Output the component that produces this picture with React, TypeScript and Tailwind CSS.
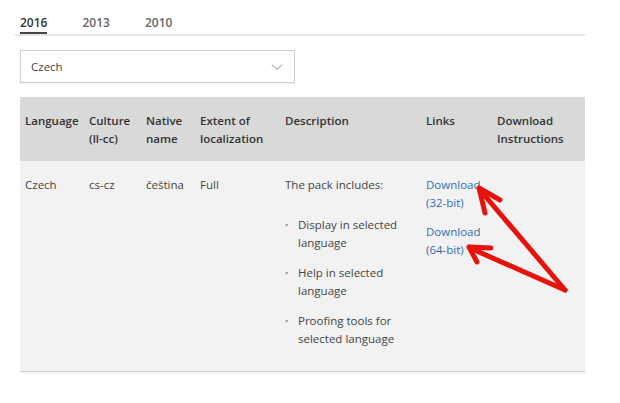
import React from "react";

const font = { fontFamily: '"Open Sans", "Noto Sans", sans-serif' };

const headers = [
  { label: ["Language"], w: "w-[64px]" },
  { label: ["Culture", "(ll-cc)"], w: "w-[57px]" },
  { label: ["Native", "name"], w: "w-[54px]" },
  { label: ["Extent of", "localization"], w: "w-[85px]" },
  { label: ["Description"], w: "w-[141px]" },
  { label: ["Links"], w: "w-[71px]" },
  { label: ["Download", "Instructions"], w: "flex-1" },
];

const bullets = [
  ["Display in selected", "language"],
  ["Help in selected", "language"],
  ["Proofing tools for", "selected language"],
];

function Arrows() {
  return (
    <svg className="pointer-events-none absolute left-0 top-0" width="620" height="403" viewBox="0 0 620 403">
      <g stroke="#e8120c" strokeWidth="5" strokeLinecap="round" strokeLinejoin="round" fill="none">
        <path d="M565 290 L480 190" />
        <path d="M479 188 L500 200 M479 188 L485 213" />
        <path d="M565 290 L470 248" />
        <path d="M469 247 L491 248 M469 247 L477 262" />
      </g>
    </svg>
  );
}

export default function App() {
  return (
    <div className="relative h-[403px] w-[620px] overflow-hidden bg-white text-[11.5px] text-[#444]" style={font}>
      <div className="pl-[20px] pr-[35px] pt-[14px]">
        {/* tabs */}
        <div className="flex items-end gap-[35px] text-[12px] font-semibold leading-[18px]">
          <div className="border-b-2 border-[#444] text-[#333]">2016</div>
          <div className="pb-[2px] text-[#666]">2013</div>
          <div className="pb-[2px] text-[#666]">2010</div>
        </div>
        <div className="-ml-[5px] h-[2px] bg-[#e6e6e6]" />

        {/* select */}
        <div className="mt-[14px] flex h-[33px] w-[275px] items-center justify-between border border-[#cfcfcf] bg-white pl-[10px] pr-[11px] shadow-[0_1px_1px_rgba(0,0,0,0.06)]">
          <span className="text-[#444]">Czech</span>
          <svg width="12" height="8" viewBox="0 0 12 8">
            <path d="M1 1.5 L6 6.5 L11 1.5" stroke="#8a8a8a" strokeWidth="1" fill="none" />
          </svg>
        </div>

        {/* table */}
        <div className="mt-[14px] w-[565px]">
          <div className="flex h-[64px] bg-[#d9d9d9] pt-[15px] font-semibold leading-[18px] text-[#333]">
            {headers.map((h, i) => (
              <div key={i} className={`${h.w} pl-[5px]`}>
                {h.label.map((l) => (
                  <div key={l}>{l}</div>
                ))}
              </div>
            ))}
          </div>
          <div className="flex h-[211px] border-b border-[#cfcfcf] bg-[#f2f2f2] pt-[15px] leading-[18px] shadow-[0_1px_1px_rgba(0,0,0,0.05)]">
            <div className="w-[64px] pl-[5px]">Czech</div>
            <div className="w-[57px] pl-[5px]">cs-cz</div>
            <div className="w-[54px] pl-[5px]">čeština</div>
            <div className="w-[85px] pl-[5px]">Full</div>
            <div className="w-[141px] pl-[5px]">
              <div>The pack includes:</div>
              <ul className="mt-[22px] flex flex-col gap-[12px]">
                {bullets.map((b) => (
                  <li key={b[0]} className="flex">
                    <span className="w-[13px] text-[9px] leading-[18px] text-[#888]">•</span>
                    <div>
                      {b.map((l) => (
                        <div key={l}>{l}</div>
                      ))}
                    </div>
                  </li>
                ))}
              </ul>
            </div>
            <div className="w-[71px] pl-[5px] text-[#2f6db5]">
              <div>Download</div>
              <div>(32-bit)</div>
              <div className="mt-[11px]">Download</div>
              <div>(64-bit)</div>
            </div>
            <div className="flex-1" />
          </div>
        </div>
      </div>
      <Arrows />
    </div>
  );
}
